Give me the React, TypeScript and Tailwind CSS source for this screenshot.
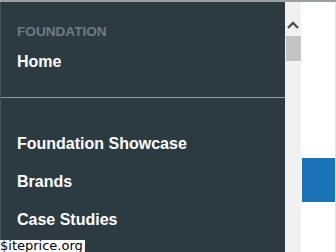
const items = ["Foundation Showcase", "Brands", "Case Studies"];

export default function App() {
  return (
    <div
      className="relative h-[252px] w-[336px] overflow-hidden border-t-2 border-[#9aa1a5] bg-white"
      style={{ fontFamily: '"Liberation Sans", Arial, sans-serif' }}
    >
      <div className="flex h-full">
        <nav className="h-full w-[285px] border-l border-[#48545b] bg-[#2c3a42] pt-[22px]">
          <div className="pl-[16px]">
            <p className="text-[13.6px] font-bold uppercase leading-[16px] text-[#6f7b83]">
              Foundation
            </p>
            <a className="mt-[12px] block text-[16px] font-bold leading-[20px] text-white">
              Home
            </a>
          </div>
          <div className="mt-[25px] h-px bg-[#8f9ba2]" />
          <ul className="mt-[36px] pl-[16px]">
            {items.map((item) => (
              <li
                key={item}
                className="mb-[18px] text-[16px] font-bold leading-[20px] text-white"
              >
                {item}
              </li>
            ))}
          </ul>
        </nav>

        <div className="flex h-full w-[16px] flex-col items-center bg-[#f1f1f1]">
          <svg
            width="14"
            height="10"
            viewBox="0 0 14 10"
            className="mt-[18px]"
          >
            <path
              d="M2 8 L7 3 L12 8"
              fill="none"
              stroke="#505050"
              strokeWidth="2.4"
            />
          </svg>
          <div className="mt-[6px] h-[25px] w-[15px] bg-[#c4c4c4]" />
        </div>

        <div className="flex h-full flex-1 border-r border-[#e6e6e6] pl-px pt-[156px]">
          <div className="h-[44px] w-full bg-[#1b74b9]" />
        </div>
      </div>

      <div
        className="absolute bottom-0 left-0 bg-white pr-[2px] text-[13px] leading-[12px] text-black"
        style={{ fontFamily: '"DejaVu Sans", Verdana, sans-serif' }}
      >
        $iteprice.org
      </div>
    </div>
  );
}
